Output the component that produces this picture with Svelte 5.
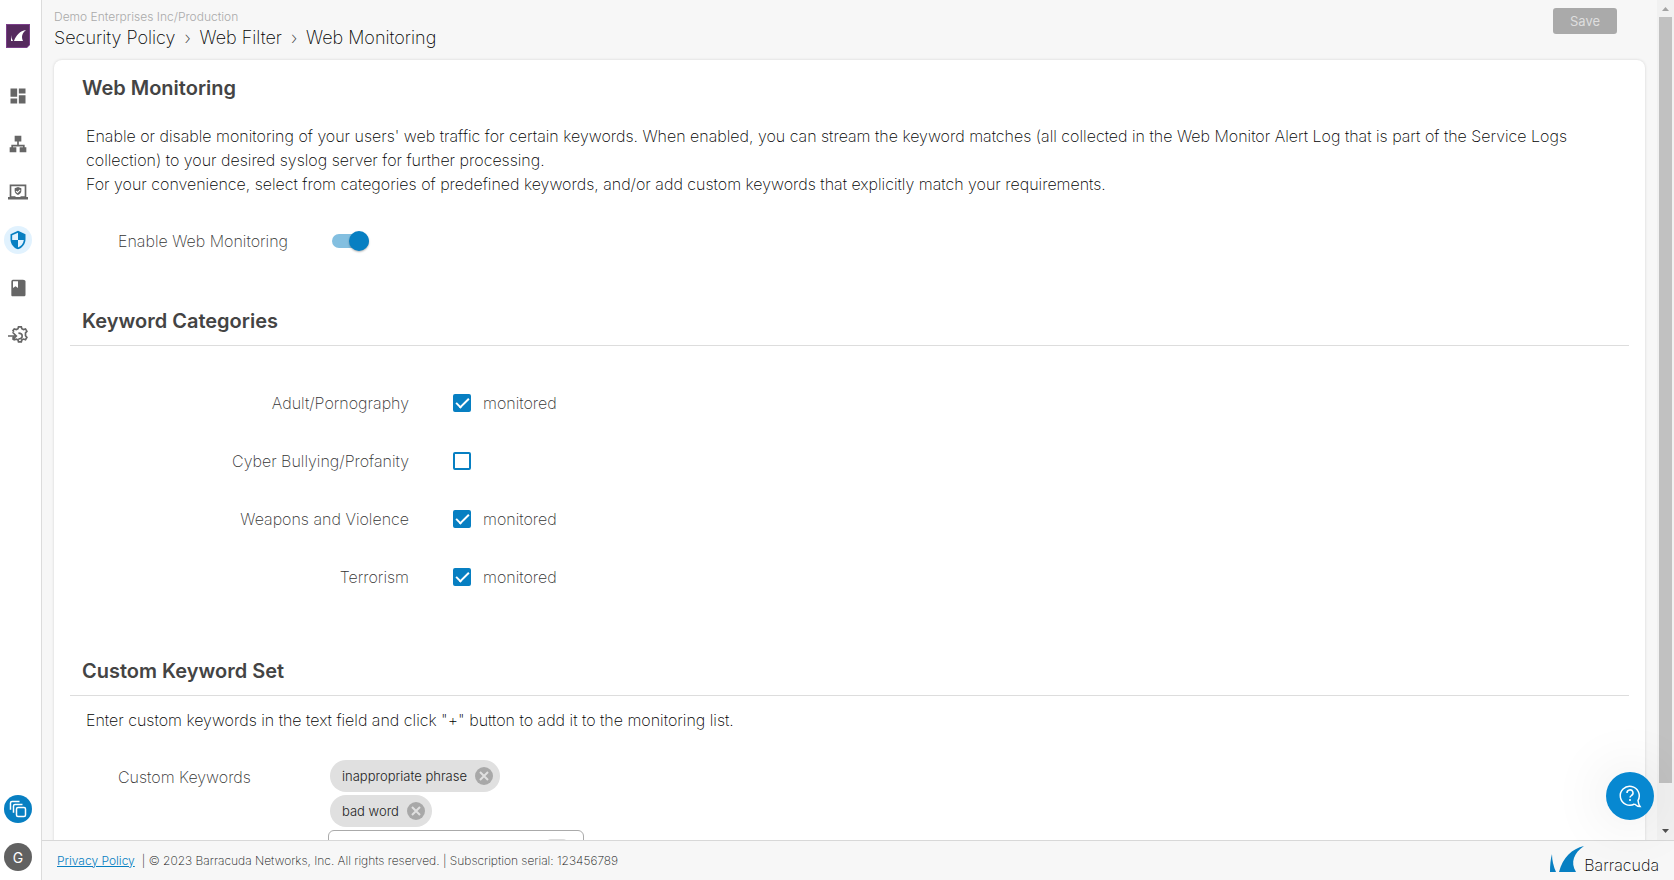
<script>
  let monitoring = $state(true);
  let newKeyword = $state('');

  let categories = $state([
    { id: 'adult', name: 'Adult/Pornography', monitored: true },
    { id: 'bullying', name: 'Cyber Bullying/Profanity', monitored: false },
    { id: 'weapons', name: 'Weapons and Violence', monitored: true },
    { id: 'terrorism', name: 'Terrorism', monitored: true }
  ]);

  let keywords = $state(['inappropriate phrase', 'bad word']);

  // Material icon paths, 24x24
  const nav = [
    { label: 'Dashboard', d: 'M3 13h8V3H3v10zm0 8h8v-6H3v6zm10 0h8V11h-8v10zm0-18v6h8V3h-8z' },
    { label: 'Network', d: 'M8 2h8v7h-3v4h7v3h2v6h-8v-6h4v-1H6v1h4v6H2v-6h2v-3h7V9H8z' },
    {
      label: 'Endpoints',
      d: 'M2 3h20v15h2v3H0v-3h2zm2 2v12h5v1h6v-1h5V5zM12 6l4 1.500v3c0 2.500-1.700 4-4 5-2.300-1-4-2.500-4-5v-3zm-2 4.500-.8.800 2.200 2.200 3.600-3.600-.8-.9-2.800 2.800z'
    },
    {
      label: 'Security Policy',
      active: true,
      d: 'M12 1 3 5v6c0 5.550 3.840 10.740 9 12 5.160-1.260 9-6.450 9-12V5l-9-4zm0 10.990h7c-.530 4.120-3.280 7.790-7 8.940V12H5V6.300l7-3.110v8.800z'
    },
    {
      label: 'Logs',
      d: 'M6 2h12c1.700 0 3 .9 3 2v16c0 1.100-.9 2-2 2H6c-1.700 0-2-.9-2-2V5c0-1.700.3-3 2-3zm0 2v8l3-2 3 2V4z'
    },
    { label: 'Integration', gear: true }
  ];

  function addKeyword(event) {
    event.preventDefault();
    if (newKeyword.trim() === '') return;
    keywords.push(newKeyword.trim());
    newKeyword = '';
  }

  function removeKeyword(index) {
    keywords.splice(index, 1);
  }
</script>

<div class="app">
  <nav class="sidebar" aria-label="Main">
    <a class="logo" href="#home" aria-label="Barracuda">
      <svg viewBox="0 0 24 24">
        <path d="M0 0h24v21l-3 3H0z" fill="#7b3f8a" />
        <path d="M1 1h22v20l-2 2H1z" fill="#562a5e" />
        <path d="M5 11q0 3 2 6H5zM8 17c2-6 6-10 12-11-4 3-5 7-3 11z" fill="#fff" />
      </svg>
    </a>
    <div class="nav-items">
      {#each nav as item}
        <a class="nav-item" class:active={item.active} href="#{item.label}" aria-label={item.label}>
          <svg viewBox="0 0 24 24">
            {#if item.gear}
              <path
                d="M0 12h9.500M5.500 7.500L10 12l-4.500 4.500M7 7L6 5.500l1.500-2 2.500.8 2-1 .6-2.300h3.400l.6 2.300 2 1 2.400-.8 1.700 2.900-1.700 1.900v3.400l1.700 1.900-1.700 2.900-2.400-.8-2 1-.6 2.300h-3.400l-.6-2.300-2-1-2.500.8-1.500-2 1-1.500M12.500 8.500q4.500 0 4.500 3.500t-4.500 3.500"
                fill="none"
                stroke="currentColor"
                stroke-width="2"
              />
            {:else}
              <path d={item.d} fill="currentColor" fill-rule="evenodd" />
            {/if}
          </svg>
        </a>
      {/each}
    </div>
    <div class="account">
      <button class="round copies" type="button" aria-label="Switch tenant">
        <svg viewBox="0 0 24 24" fill="none" stroke="#fff" stroke-width="2">
          <path d="M2 13V4q0-2 2-2h10M6 17V8q0-2 2-2h10" />
          <rect x="10" y="10" width="12" height="12" rx="2" />
        </svg>
      </button>
      <button class="round avatar" type="button">G</button>
    </div>
  </nav>

  <div class="page">
    <div class="viewport">
      <main class="content">
        <header>
          <div class="titles">
            <div class="tenant">Demo Enterprises Inc/Production</div>
            <div class="crumbs">
              <span>Security Policy</span><span class="sep">›</span><span>Web Filter</span><span class="sep">›</span><span>Web Monitoring</span>
            </div>
          </div>
          <button class="save" type="button" disabled>Save</button>
        </header>

        <section class="card">
          <h2>Web Monitoring</h2>
          <p class="intro">
            Enable or disable monitoring of your users' web traffic for certain keywords. When enabled, you can stream the keyword matches (all collected in the Web Monitor Alert Log that is part of the Service Logs collection) to your desired syslog server for further processing.<br />
            For your convenience, select from categories of predefined keywords, and/or add custom keywords that explicitly match your requirements.
          </p>
          <div class="field">
            <label for="monitoring">Enable Web Monitoring</label>
            <input id="monitoring" class="switch" type="checkbox" role="switch" bind:checked={monitoring} />
          </div>

          <h2 class="ruled">Keyword Categories</h2>
          <div class="categories">
            {#each categories as category}
              <div class="category">
                <label for={category.id}>{category.name}</label>
                <input id={category.id} class="check" type="checkbox" bind:checked={category.monitored} />
                {#if category.monitored}
                  <span>monitored</span>
                {/if}
              </div>
            {/each}
          </div>

          <h2 class="ruled">Custom Keyword Set</h2>
          <p class="hint">Enter custom keywords in the text field and click "+" button to add it to the monitoring list.</p>
          <div class="field keywords">
            <label for="keyword">Custom Keywords</label>
            <div class="chips">
              {#each keywords as keyword, i}
                <span class="chip">
                  {keyword}
                  <button type="button" aria-label="Remove {keyword}" onclick={() => removeKeyword(i)}>
                    <svg viewBox="0 0 18 18"><path d="M5 5l8 8M13 5l-8 8" stroke="#e0e0e0" stroke-width="2" /></svg>
                  </button>
                </span>
              {/each}
              <form class="add" onsubmit={addKeyword}>
                <input id="keyword" type="text" bind:value={newKeyword} />
                <button type="submit" aria-label="Add keyword"></button>
              </form>
            </div>
          </div>
        </section>
      </main>

      <div class="scrollbar" aria-hidden="true">
        <svg viewBox="0 0 17 17"><path d="M5 11h7L8.500 7z" fill="#a3a3a3" /></svg>
        <div class="track"><div class="thumb"></div></div>
        <svg viewBox="0 0 17 17"><path d="M5 6h7l-3.500 4z" fill="#505050" /></svg>
      </div>
    </div>

    <footer>
      <div class="legal">
        <a href="#privacy">Privacy Policy</a>
        <span>| © 2023 Barracuda Networks, Inc. All rights reserved. | Subscription serial: 123456789</span>
      </div>
      <div class="brand">
        <svg viewBox="0 0 34 26" fill="#077fc2">
          <path d="M2 8q0 9 4 18H0Q0 15 2 8zM9 26C13 11 22 3 34 0 24 7 20 16 26 26z" />
        </svg>
        <span>Barracuda</span>
      </div>
    </footer>
  </div>

  <button class="help" type="button" aria-label="Help">
    <svg viewBox="0 0 24 24" fill="none" stroke="#fff" stroke-width="2">
      <path d="M16.500 20A9.500 9.500 0 1 1 20 16.500q.5 4 2 6-3 0-5.500-2.500" />
      <path d="M9 9a3 3 0 1 1 4.500 2.500q-1.500 1-1.500 2M12 15v2" />
    </svg>
  </button>
</div>

<style>
  :global(body) {
    background: #f7f7f7;
  }

  .app {
    display: flex;
    height: 100vh;
    overflow: hidden;
    font-family: Inter, 'Open Sans', sans-serif;
    font-size: 16px;
    font-weight: 200;
    line-height: 24px;
    color: #000;
  }

  svg {
    display: block;
  }

  button {
    padding: 0;
    border: 0;
    font-family: inherit;
    cursor: pointer;
  }

  .sidebar {
    display: flex;
    flex-direction: column;
    flex: none;
    width: 41px;
    background: #fff;
    border-right: 1px solid #dcdcdc;
  }

  .logo {
    width: 24px;
    margin: 24px 0 0 6px;
  }

  .nav-items {
    display: flex;
    flex-direction: column;
    gap: 20px;
    margin: 34px 0 0 4px;
  }

  .nav-item {
    display: grid;
    place-items: center;
    width: 28px;
    height: 28px;
    border-radius: 50%;
    color: #666;
  }

  .nav-item svg {
    width: 20px;
    height: 20px;
  }

  .nav-item.active {
    background: #e1f2fe;
    color: #077fc2;
  }

  .account {
    display: flex;
    flex-direction: column;
    gap: 20px;
    margin: auto 0 9px 4px;
  }

  .round {
    display: grid;
    place-items: center;
    width: 28px;
    height: 28px;
    border-radius: 50%;
    color: #fff;
    font-size: 14px;
  }

  .round svg {
    width: 18px;
    height: 18px;
  }

  .copies {
    background: #077fc2;
  }

  .avatar {
    background: #616161;
  }

  .page {
    display: flex;
    flex-direction: column;
    flex: 1;
    min-width: 0;
  }

  .viewport {
    display: flex;
    flex: 1;
    min-height: 0;
  }

  .content {
    flex: 1;
    min-width: 0;
    padding: 8px 12px 0;
    overflow: hidden;
  }

  header {
    display: flex;
    justify-content: space-between;
    align-items: flex-start;
    height: 52px;
  }

  .tenant {
    font-size: 12px;
    font-weight: 300;
    line-height: 18px;
    color: #aaa;
  }

  .crumbs {
    display: flex;
    font-size: 18px;
    line-height: 24px;
  }

  .sep {
    width: 24px;
    text-align: center;
    color: #444;
  }

  .save {
    width: 64px;
    height: 26px;
    margin-right: 28px;
    border-radius: 3px;
    background: #aaa;
    color: #dedede;
    font-size: 13px;
  }

  .card {
    padding: 16px 16px 40px;
    background: #fff;
    border-radius: 8px;
    box-shadow: 0 0 3px rgba(0, 0, 0, 0.15);
  }

  h2 {
    margin: 0;
    padding: 0 12px;
    font-size: 20px;
    font-weight: 600;
    line-height: 24px;
    color: #444;
  }

  .ruled {
    padding-bottom: 12px;
    border-bottom: 1px solid #ddd;
  }

  .intro,
  .hint {
    margin: 0;
    padding: 0 16px;
  }

  .intro {
    padding-top: 24px;
  }

  .hint {
    padding-top: 12px;
  }

  label {
    color: #333;
  }

  .field {
    display: flex;
    align-items: center;
    margin: 33px 0 56px 48px;
  }

  .field label {
    width: 214px;
  }

  .switch {
    appearance: none;
    display: flex;
    align-items: center;
    width: 37px;
    height: 14px;
    margin: 5px 0;
    border-radius: 7px;
    background: #bbb;
  }

  .switch:checked {
    justify-content: flex-end;
    background: #83bfe0;
  }

  .switch::before {
    content: '';
    flex: none;
    width: 20px;
    height: 20px;
    border-radius: 50%;
    background: #077fc2;
    box-shadow: 0 1px 2px rgba(0, 0, 0, 0.3);
  }

  .categories {
    padding: 28px 0 53px;
  }

  .category {
    display: flex;
    align-items: center;
    height: 58px;
    color: #333;
  }

  .category label {
    width: 339px;
    text-align: right;
  }

  .check {
    appearance: none;
    display: grid;
    place-items: center;
    box-sizing: border-box;
    width: 18px;
    height: 18px;
    margin: 0 12px 0 44px;
    border: 2px solid #077fc2;
    border-radius: 2px;
  }

  .check:checked {
    background: #077fc2;
  }

  .check:checked::before {
    content: '';
    width: 13px;
    height: 7px;
    border: solid #fff;
    border-width: 0 0 2px 2px;
    box-sizing: border-box;
    transform: translateY(-2px) rotate(-45deg);
  }

  .keywords {
    align-items: flex-start;
    margin-top: 28px;
  }

  .keywords label {
    padding-top: 5px;
    width: 210px;
  }

  .chips {
    display: flex;
    flex-direction: column;
    align-items: flex-start;
    gap: 3px;
  }

  .chip {
    display: flex;
    align-items: center;
    gap: 8px;
    height: 32px;
    margin-left: 2px;
    padding: 0 7px 0 12px;
    border-radius: 16px;
    background: #e0e0e0;
    font-size: 13px;
    font-weight: 300;
    color: #222;
  }

  .chip button {
    width: 18px;
    height: 18px;
    border-radius: 50%;
    background: #a8a8a8;
  }

  .add {
    display: flex;
    align-items: center;
    width: 256px;
    height: 38px;
    box-sizing: border-box;
    padding-right: 16px;
    border: 1px solid #aaa;
    border-radius: 6px;
  }

  .add input {
    flex: 1;
    min-width: 0;
    border: 0;
    background: none;
    font: inherit;
  }

  .add button {
    width: 20px;
    height: 20px;
    border-radius: 4px;
    background: #ddd;
  }

  .scrollbar {
    display: flex;
    flex-direction: column;
    flex: none;
    width: 17px;
    background: #f1f1f1;
  }

  .track {
    flex: 1;
    padding: 0 2px;
  }

  .thumb {
    height: 95%;
    background: #c1c1c1;
  }

  footer {
    display: flex;
    justify-content: space-between;
    align-items: center;
    height: 39px;
    padding: 0 15px;
    border-top: 1px solid #d8d8d8;
    background: #f7f7f7;
  }

  .legal {
    display: flex;
    gap: 7px;
    font-size: 12px;
    color: #111;
  }

  .legal a {
    color: #077fc2;
    font-weight: 300;
  }

  .brand {
    display: flex;
    align-items: flex-end;
    font-size: 16px;
    line-height: 20px;
    color: #000;
  }

  .brand svg {
    width: 34px;
    height: 26px;
    margin-bottom: 3px;
  }

  .help {
    position: fixed;
    right: 20px;
    bottom: 60px;
    display: grid;
    place-items: center;
    width: 48px;
    height: 48px;
    border-radius: 50%;
    background: #0788d1;
    box-shadow: 0 0 60px rgba(0, 0, 0, 0.12);
  }

  .help svg {
    width: 24px;
    height: 24px;
    stroke-width: 1.5;
  }
</style>
